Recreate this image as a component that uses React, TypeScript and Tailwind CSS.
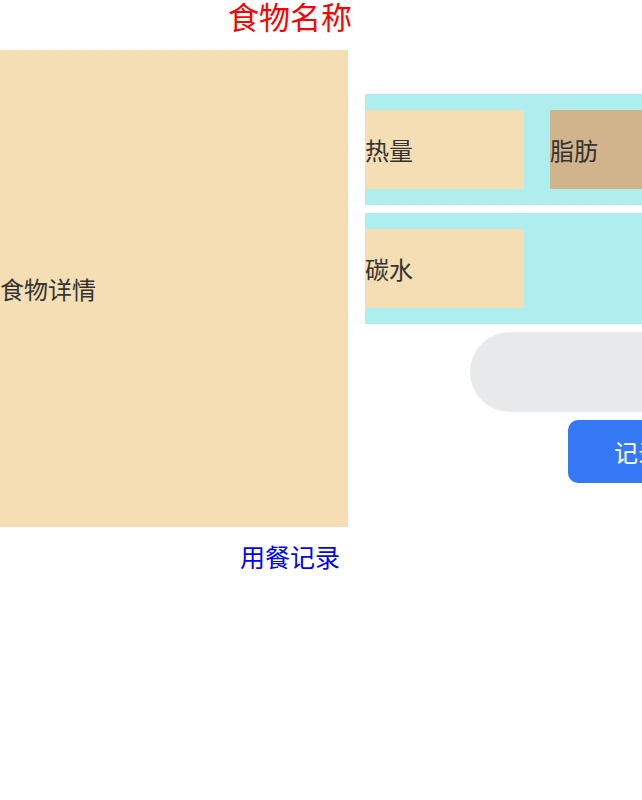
export default function App() {
  return (
    <div className="w-[642px] h-[800px] overflow-hidden bg-white font-['Noto_Sans_CJK_SC','Noto_Sans',sans-serif] text-[#333]">
      <div className="w-[580px] h-[50px] text-center text-[31px] leading-[31px] text-[#ff0000]">食物名称</div>

      <div className="flex items-center gap-[17px]">
        <div className="w-[348px] h-[477px] shrink-0 flex items-center bg-[#f5deb3] text-[24px]">食物详情</div>

        <div className="flex flex-col gap-2 shrink-0 w-[420px]">
          <div className="flex items-center gap-[26px] py-4 bg-[#afeeee]">
            <div className="w-[159px] h-[79px] flex items-center bg-[#f5deb3] text-[24px]">热量</div>
            <div className="w-[159px] h-[79px] flex items-center bg-[#d2b48c] text-[24px]">脂肪</div>
          </div>
          <div className="flex items-center py-4 bg-[#afeeee]">
            <div className="w-[159px] h-[79px] flex items-center bg-[#f5deb3] text-[24px]">碳水</div>
          </div>
          <div className="ml-[105px] w-[300px] h-[80px] rounded-full bg-[#e8e9eb]"></div>
          <button className="ml-[203px] w-[140px] h-[63px] rounded-[10px] bg-[#3478f6] text-white text-[24px]">记录</button>
        </div>
      </div>

      <div className="w-[580px] mt-[17px] text-center text-[25px] leading-[25px] text-[#0000ff]">用餐记录</div>
    </div>
  );
}
